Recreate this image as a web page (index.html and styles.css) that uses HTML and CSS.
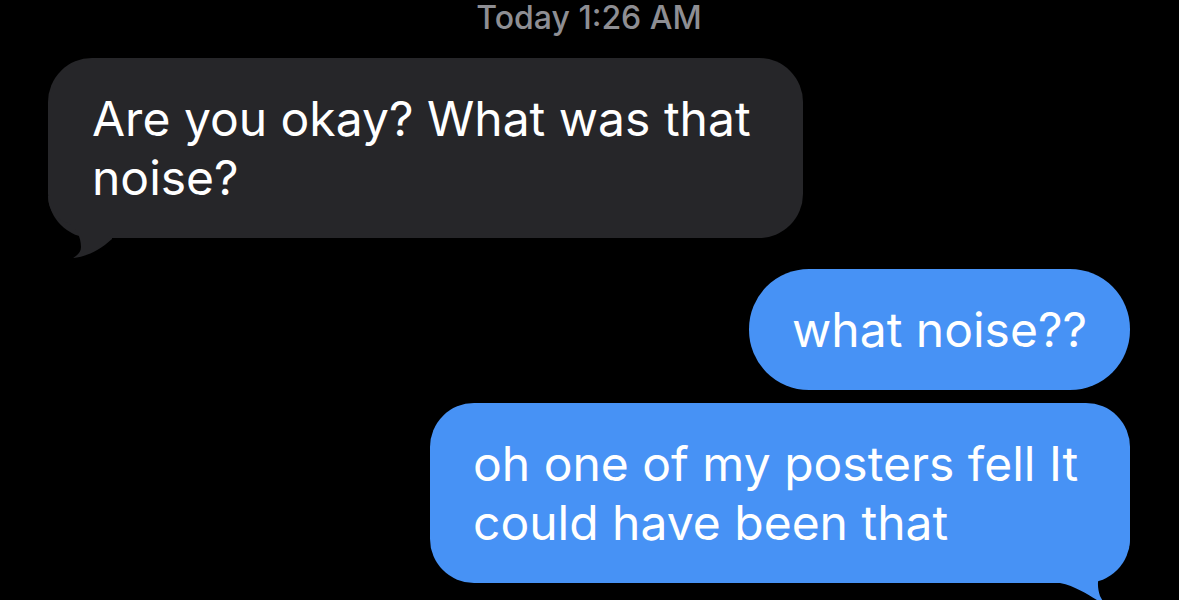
FILE: index.html
```html
<!DOCTYPE html>
<html lang="en">
<head>
<meta charset="utf-8">
<title>Messages</title>
<link rel="stylesheet" href="styles.css">
</head>
<body>
<div class="chat">
  <div class="stamp"><span class="day">Today</span> 1:26 AM</div>
  <div class="row row-in">
    <div class="bubble bubble-grey">Are you okay? What was that noise?<svg class="tail tail-in" viewBox="0 0 64 62" width="64" height="62" aria-hidden="true"><path d="M0,0 C0,14 8,24 20,27 C28,31 33,41 33,51 C33,56 30,59 25,62 C37,61 51,55 64,43 L64,0 Z"/></svg></div>
  </div>
  <div class="row row-out row-gap">
    <div class="bubble bubble-blue bubble-pill">what noise??</div>
  </div>
  <div class="row row-out">
    <div class="bubble bubble-blue bubble-wide">oh one of my posters fell It could have been that<svg class="tail tail-out" viewBox="-70 -60 70 84" width="70" height="84" aria-hidden="true"><path d="M0,-60 L0,-45 C0,-25 -14,-14 -28,-9 C-33,-6 -33,4 -30,13 C-28,17 -26,20 -24,22 C-35,17 -50,4 -70,0 L-70,-60 Z"/></svg></div>
  </div>
</div>
</body>
</html>
```
FILE: styles.css
```css
html, body {
  margin: 0;
  padding: 0;
  background: #000;
}
body {
  height: 600px;
  overflow: hidden;
  font-family: "Inter", "Roboto", "Liberation Sans", sans-serif;
  -webkit-font-smoothing: antialiased;
}
.chat {
  display: flex;
  flex-direction: column;
  padding: 0 49px 0 48px;
}
.stamp {
  height: 36px;
  line-height: 36px;
  margin-bottom: 22px;
  text-align: center;
  color: #8e8e93;
  font-size: 32px;
  font-weight: 500;
}
.row {
  display: flex;
}
.row-in {
  justify-content: flex-start;
  margin-bottom: 31px;
}
.row-out {
  justify-content: flex-end;
}
.row-gap {
  margin-bottom: 13px;
}
.bubble {
  position: relative;
  box-sizing: border-box;
  width: fit-content;
  padding: 31px 43px;
  font-size: 48px;
  line-height: 59px;
  color: #fff;
  border-radius: 44px;
}
.bubble-grey {
  background: #262629;
  max-width: 755px;
  padding-left: 44px;
}
.bubble-grey .tail path { fill: #262629; }
.bubble-blue {
  background: #4792f5;
}
.bubble-blue .tail path { fill: #4792f5; }
.bubble-pill {
  border-radius: 60px;
}
.bubble-wide {
  max-width: 700px;
}
.tail {
  position: absolute;
  display: block;
}
.tail-in {
  left: 0;
  bottom: -20px;
}
.tail-out {
  right: 0;
  bottom: -24px;
}
```
